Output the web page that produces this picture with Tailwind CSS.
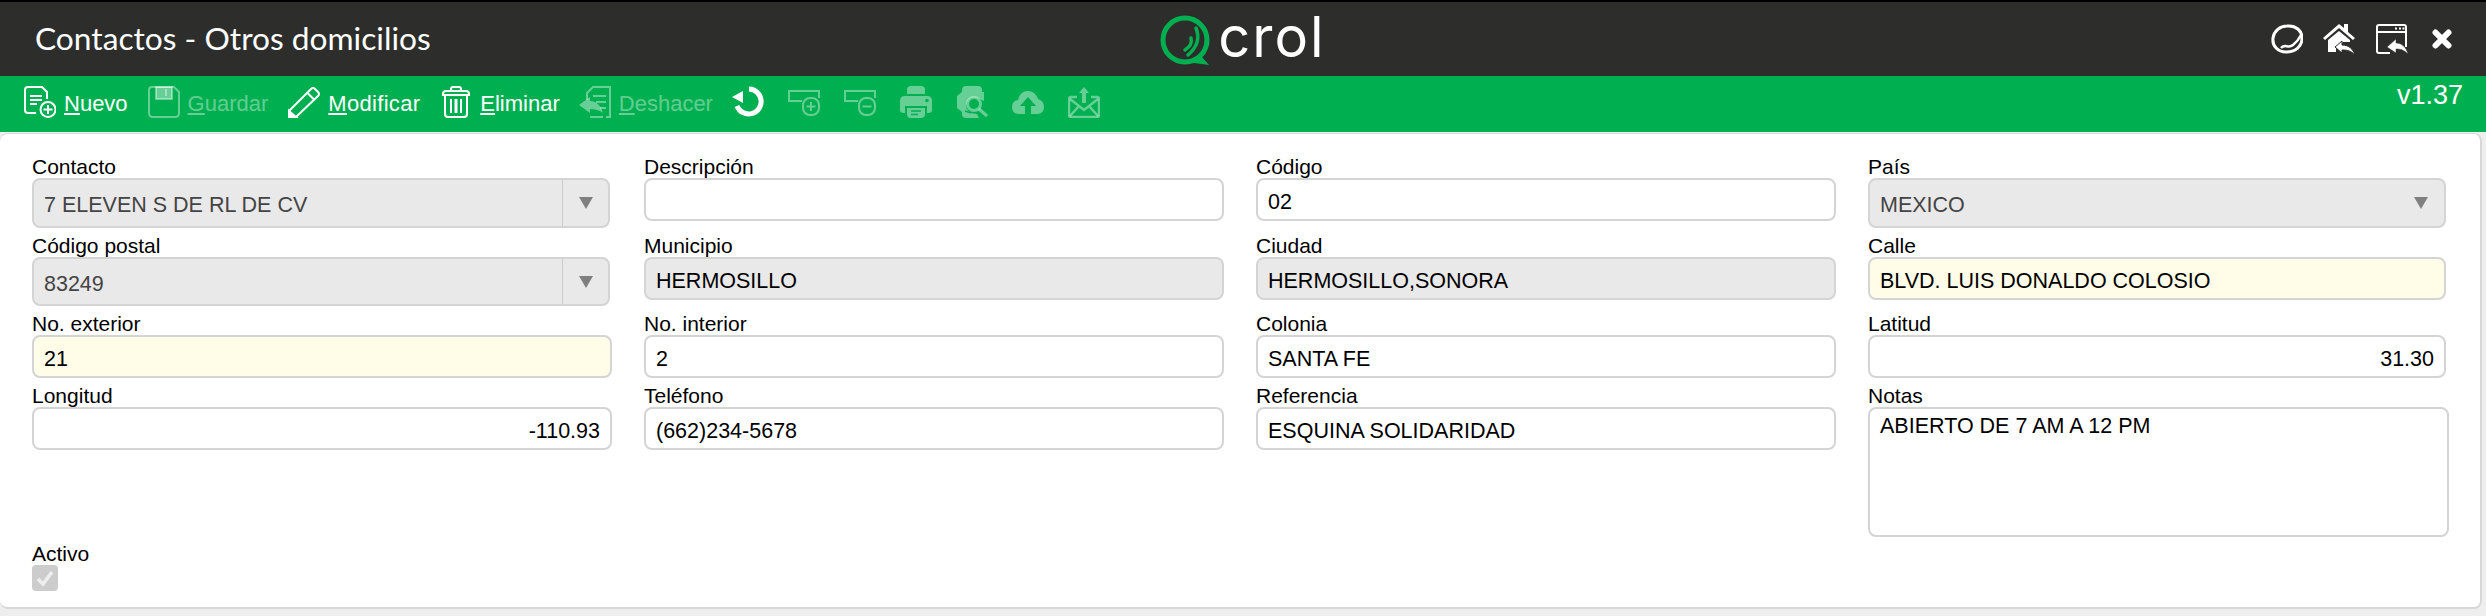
<!DOCTYPE html>
<html lang="es">
<head>
  <meta charset="UTF-8">
  <title>Contactos - Otros domicilios</title>
  <script src="https://cdn.jsdelivr.net/npm/@tailwindcss/browser@4"></script>
</head>
<body class="bg-[#eeeeee] h-[616px] w-[2486px] overflow-hidden font-['Liberation_Sans',Arial,sans-serif] text-black">

  <!-- title bar -->
  <header class="h-[76px] bg-[#2d2e2c] grid grid-cols-[1fr_auto_1fr] items-center border-t-2 border-black">
    <h1 class="pl-[35px] font-['Lato',sans-serif] text-[31.7px] text-white leading-none">Contactos - Otros domicilios</h1>
    <div class="flex items-center gap-[4px]">
      <svg class="w-[54px] h-[52px]" viewBox="0 0 54 52" fill="none" stroke="#00b050">
        <circle cx="25" cy="27" r="22" stroke-width="5"/>
        <path d="M27 49 L49 52 L41 43 Z" fill="#00b050" stroke="none"/>
        <path d="M36 15 Q42 30 28 42" stroke-width="3.500" stroke-linecap="round"/>
        <path d="M31 25 Q33 32 25 37" stroke-width="3.500" stroke-linecap="round"/>
      </svg>
      <span class="font-['Inter',sans-serif] font-normal text-[56px] leading-none text-white tracking-[2px] -mt-[4px]">crol</span>
    </div>
    <div class="flex items-center justify-end pr-[34px] gap-[20px] text-white">
      <svg class="w-[32px] h-[30px]" viewBox="0 0 32 30" fill="none" stroke="currentColor">
        <path d="M16 2 C25 1 31 7 31 14 C31 23 24 28 15 28 C7 28 1 22 2 14 C3 7 9 2 16 2 Z" stroke-width="3"/>
        <path d="M10 24 C14 19 17 25 22 21 C26 18 28 15 30 11" stroke-width="2.500"/>
      </svg>
      <svg class="w-[32px] h-[32px]" viewBox="0 0 32 32" fill="currentColor">
        <path d="M0 15 L16 1 L21 5 V1 H25 V9 L32 15 L30 17 L16 5 L2 17 Z"/>
        <path d="M5 17 L16 8 L27 17 V19 H20 L13 25 V29 H5 Z"/>
        <path d="M12 24 L19 18 V22 C26 22 30 26 32 32 C28 28 25 27 19 27 V30 Z" stroke="#2d2e2c" stroke-width="1"/>
      </svg>
      <svg class="w-[32px] h-[30px] ml-[1px]" viewBox="0 0 32 30" fill="none" stroke="currentColor">
        <path d="M14 29 H3 Q1 29 1 27 V3 Q1 1 3 1 H28 Q30 1 30 3 V23" stroke-width="2"/>
        <path d="M1 8 H30" stroke-width="2"/>
        <path d="M19 4.500 H21 M23 4.500 H25 M26.500 4.500 H28.500" stroke-width="2"/>
        <path d="M11 23 L20 15 V19 C26 19 30 23 32 30 C28 26 25 25 20 25 V29 Z" fill="currentColor" stroke="#2d2e2c" stroke-width="0.500"/>
      </svg>
      <svg class="w-[20px] h-[20px] ml-[4px]" viewBox="0 0 20 20" stroke="currentColor" stroke-width="6" stroke-linecap="round">
        <path d="M3.500 3.500 L16.500 16.500 M16.500 3.500 L3.500 16.500"/>
      </svg>
    </div>
  </header>

  <!-- toolbar -->
  <div class="h-[56px] bg-[#00b050] flex justify-between pl-[24px] pr-[23px]">
    <nav class="flex items-center h-[52px] text-[22px] leading-none">
      <button class="flex items-center gap-[8px] text-white mr-[20px]">
        <svg class="w-[32px] h-[32px]" viewBox="0 0 32 32" fill="none" stroke="currentColor" stroke-width="2">
          <path d="M12 27 H4 Q1 27 1 24 V4 Q1 1 4 1 H18 L23 6 V13"/>
          <path d="M6 10 H18 M6 14 H18 M6 18 H13"/>
          <circle cx="24" cy="23.500" r="7.500"/>
          <path d="M24 19 V28 M19.500 23.500 H28.500"/>
        </svg>
        <span class="pt-[4px]"><u>N</u>uevo</span>
      </button>
      <button class="flex items-center gap-[8px] text-white/40 mr-[20px]">
        <svg class="w-[32px] h-[32px]" viewBox="0 0 32 32" fill="none" stroke="currentColor" stroke-width="2">
          <path d="M4 1 H26 L31 6 V27 Q31 31 27 31 H5 Q1 31 1 27 V4 Q1 1 4 1 Z"/>
          <path d="M8 1 H24 V13 H8 Z M18 3 V10" fill="currentColor"/>
        </svg>
        <span class="pt-[4px]"><u>G</u>uardar</span>
      </button>
      <button class="flex items-center gap-[8px] text-white mr-[20px]">
        <svg class="w-[32px] h-[32px]" viewBox="0 0 32 32" fill="none" stroke="currentColor" stroke-width="2">
          <path d="M1 31 V25 L23 3 Q25 1 27 3 L30 6 Q32 8 30 10 L8 31 Z"/>
          <path d="M19 6.500 L26.500 14"/>
          <path d="M1 25 L8 31 H1 Z" fill="currentColor"/>
        </svg>
        <span class="pt-[4px] tracking-[0.3px]"><u>M</u>odificar</span>
      </button>
      <button class="flex items-center gap-[8px] text-white mr-[19px]">
        <svg class="w-[32px] h-[32px]" viewBox="0 0 32 32" fill="none" stroke="currentColor" stroke-width="2">
          <path d="M3 8 Q3 5 6 5 H26 Q29 5 29 8 V9 H3 Z"/>
          <path d="M11 5 V3 Q11 1 13 1 H19 Q21 1 21 3 V5"/>
          <path d="M5 9 V28 Q5 31 8 31 H24 Q27 31 27 28 V9"/>
          <path d="M11 13 V27 M21 13 V27"/>
          <path d="M16 13 V27" stroke-width="3"/>
        </svg>
        <span class="pt-[4px]"><u>E</u>liminar</span>
      </button>
      <button class="flex items-center gap-[8px] text-white/40 mr-[19px]">
        <svg class="w-[32px] h-[32px]" viewBox="0 0 32 32" fill="none" stroke="currentColor" stroke-width="2">
          <path d="M8 14 V7 L14 1 H31 V31 H27"/>
          <path d="M14 10 H27 M17 16 H27 M21 22 H27 M11 31 H24"/>
          <path d="M0 19 L11 11 V15 C18 15 22 20 24 27 C20 24 16 23 11 23 V27 Z" fill="currentColor" stroke="none"/>
        </svg>
        <span class="pt-[4px]"><u>D</u>eshacer</span>
      </button>
      <div class="flex items-center gap-[24px] text-white/40">
        <svg class="w-[32px] h-[32px] text-white" viewBox="0 0 32 32" fill="none" stroke="currentColor" stroke-width="5">
          <path d="M17 3 A12.500 12.500 0 1 1 5 20"/>
          <path d="M0 11 L11 5 V17 Z" fill="currentColor" stroke="none"/>
        </svg>
        <svg class="w-[32px] h-[32px]" viewBox="0 0 32 32" fill="none" stroke="currentColor" stroke-width="2">
          <path d="M14 15 H1 V5 H31 V12"/>
          <rect x="15" y="12" width="16" height="17" rx="7"/>
          <path d="M23 16 V25 M18.500 20.500 H27.500"/>
        </svg>
        <svg class="w-[32px] h-[32px]" viewBox="0 0 32 32" fill="none" stroke="currentColor" stroke-width="2">
          <path d="M14 15 H1 V5 H31 V12"/>
          <rect x="15" y="12" width="16" height="17" rx="7"/>
          <path d="M18.500 20.500 H27.500"/>
        </svg>
        <svg class="w-[32px] h-[32px]" viewBox="0 0 32 32" fill="currentColor">
          <path d="M7 4 Q7 0 11 0 H21 Q25 0 25 4 V8 H7 Z"/>
          <path d="M5 10 H27 Q32 10 32 15 V24 Q32 27 28 27 H27 V20 H5 V27 H4 Q0 27 0 24 V15 Q0 10 5 10 Z"/>
          <path d="M7 22 H25 V28 Q25 32 21 32 H11 Q7 32 7 28 Z"/>
          <path d="M11 25 H21 M11 28.500 H18" stroke="#00b050" stroke-width="1.500"/>
          <circle cx="27" cy="14.500" r="1.800" fill="#00b050"/>
        </svg>
        <svg class="w-[32px] h-[32px]" viewBox="0 0 32 32" fill="currentColor">
          <path d="M6 4 Q6 0 10 0 H22 Q26 0 26 4 V6 H28 V15 L24 13 Q15 9 11 16 Q8 23 15 27 L21 28 L23 32 H10 Q6 32 6 28 V26 L1 22 V10 L6 6 Z"/>
          <circle cx="18" cy="18" r="6.500" fill="none" stroke="currentColor" stroke-width="3"/>
          <path d="M23 23 L31 30" stroke="currentColor" stroke-width="3" fill="none"/>
          <path d="M9 25 L15 27" stroke="#00b050" stroke-width="1.500"/>
        </svg>
        <svg class="w-[32px] h-[32px]" viewBox="0 0 32 32" fill="currentColor">
          <path d="M7 28 Q0 28 0 21 Q0 15 6 14 Q8 5 16 5 Q23 5 26 13 Q32 15 32 21 Q32 28 25 28 H19 V20 H24 L16 11 L8 20 H13 V28 Z"/>
        </svg>
        <svg class="w-[32px] h-[32px]" viewBox="0 0 32 32" fill="none" stroke="currentColor" stroke-width="2.500">
          <path d="M9 11 H3 Q1 11 1 13 V29 Q1 31 3 31 H29 Q31 31 31 29 V13 Q31 11 29 11 H23"/>
          <path d="M2 13 L16 24 L30 13 M2 30 L11 20 M30 30 L21 20"/>
          <path d="M16 1 L21 7 H18 V17 H14 V7 H11 Z" fill="currentColor" stroke="none"/>
        </svg>
      </div>
    </nav>
    <span class="text-[27px] leading-none text-white pt-[6px]">v1.37</span>
  </div>

  <!-- form panel -->
  <main class="mt-[1px] mr-[4px] h-[476px] bg-white rounded-lg border-t border-b-2 border-r-2 border-[#d8d8d8] pl-[32px] pt-[21px] text-[21px]">
    <div class="grid grid-cols-[580px_580px_580px_578px] gap-x-[32px] gap-y-[6px] items-start">

      <div>
        <label class="block h-[23px] leading-[23px]">Contacto</label>
        <div class="flex items-center w-[578px] h-[50px] bg-[#e9e9e9] border-2 border-[#d4d4d4] rounded-lg text-[21.5px] text-[#444444]">
          <span class="flex-1 pl-[10px] pt-[5px]">7 ELEVEN S DE RL DE CV</span>
          <span class="w-[46px] h-full flex items-center justify-center border-l border-[#cccccc]"><span class="w-0 h-0 border-x-[7px] border-t-[12px] border-x-transparent border-t-[#808080]"></span></span>
        </div>
      </div>
      <div>
        <label class="block h-[23px] leading-[23px]">Descripción</label>
        <input type="text" value="" class="w-full h-[43px] bg-white border-2 border-[#d4d4d4] rounded-lg px-[10px] pt-[5px] text-[21.5px]">
      </div>
      <div>
        <label class="block h-[23px] leading-[23px]">Código</label>
        <input type="text" value="02" class="w-full h-[43px] bg-white border-2 border-[#d4d4d4] rounded-lg px-[10px] pt-[5px] text-[21.5px]">
      </div>
      <div>
        <label class="block h-[23px] leading-[23px]">País</label>
        <div class="flex items-center w-[578px] h-[50px] bg-[#e9e9e9] border-2 border-[#d4d4d4] rounded-lg text-[21.5px] text-[#444444]">
          <span class="flex-1 pl-[10px] pt-[5px]">MEXICO</span>
          <span class="w-[46px] h-full flex items-center justify-center"><span class="w-0 h-0 border-x-[7px] border-t-[12px] border-x-transparent border-t-[#808080]"></span></span>
        </div>
      </div>

      <div>
        <label class="block h-[23px] leading-[23px]">Código postal</label>
        <div class="flex items-center w-[578px] h-[49px] bg-[#e9e9e9] border-2 border-[#d4d4d4] rounded-lg text-[21.5px] text-[#444444]">
          <span class="flex-1 pl-[10px] pt-[5px]">83249</span>
          <span class="w-[46px] h-full flex items-center justify-center border-l border-[#cccccc]"><span class="w-0 h-0 border-x-[7px] border-t-[12px] border-x-transparent border-t-[#808080]"></span></span>
        </div>
      </div>
      <div>
        <label class="block h-[23px] leading-[23px]">Municipio</label>
        <input type="text" value="HERMOSILLO" disabled class="w-full h-[43px] bg-[#e9e9e9] border-2 border-[#d4d4d4] rounded-lg px-[10px] pt-[5px] text-[21.5px] text-black">
      </div>
      <div>
        <label class="block h-[23px] leading-[23px]">Ciudad</label>
        <input type="text" value="HERMOSILLO,SONORA" disabled class="w-full h-[43px] bg-[#e9e9e9] border-2 border-[#d4d4d4] rounded-lg px-[10px] pt-[5px] text-[21.5px] text-black">
      </div>
      <div>
        <label class="block h-[23px] leading-[23px]">Calle</label>
        <input type="text" value="BLVD. LUIS DONALDO COLOSIO" class="w-full h-[43px] bg-[#fffde7] border-2 border-[#d4d4d4] rounded-lg px-[10px] pt-[5px] text-[21.5px]">
      </div>

      <div>
        <label class="block h-[23px] leading-[23px]">No. exterior</label>
        <input type="text" value="21" class="w-full h-[43px] bg-[#fffde7] border-2 border-[#d4d4d4] rounded-lg px-[10px] pt-[5px] text-[21.5px]">
      </div>
      <div>
        <label class="block h-[23px] leading-[23px]">No. interior</label>
        <input type="text" value="2" class="w-full h-[43px] bg-white border-2 border-[#d4d4d4] rounded-lg px-[10px] pt-[5px] text-[21.5px]">
      </div>
      <div>
        <label class="block h-[23px] leading-[23px]">Colonia</label>
        <input type="text" value="SANTA FE" class="w-full h-[43px] bg-white border-2 border-[#d4d4d4] rounded-lg px-[10px] pt-[5px] text-[21.5px]">
      </div>
      <div>
        <label class="block h-[23px] leading-[23px]">Latitud</label>
        <input type="text" value="31.30" class="w-full h-[43px] bg-white border-2 border-[#d4d4d4] rounded-lg px-[10px] pt-[5px] text-[21.5px] text-right">
      </div>

      <div>
        <label class="block h-[23px] leading-[23px]">Longitud</label>
        <input type="text" value="-110.93" class="w-full h-[43px] bg-white border-2 border-[#d4d4d4] rounded-lg px-[10px] pt-[5px] text-[21.5px] text-right">
      </div>
      <div>
        <label class="block h-[23px] leading-[23px]">Teléfono</label>
        <input type="text" value="(662)234-5678" class="w-full h-[43px] bg-white border-2 border-[#d4d4d4] rounded-lg px-[10px] pt-[5px] text-[21.5px]">
      </div>
      <div>
        <label class="block h-[23px] leading-[23px]">Referencia</label>
        <input type="text" value="ESQUINA SOLIDARIDAD" class="w-full h-[43px] bg-white border-2 border-[#d4d4d4] rounded-lg px-[10px] pt-[5px] text-[21.5px]">
      </div>
      <div>
        <label class="block h-[23px] leading-[23px]">Notas</label>
        <textarea class="block w-[581px] h-[130px] bg-white border-2 border-[#d4d4d4] rounded-lg px-[10px] py-[4px] text-[21.5px] leading-[26px] resize-none">ABIERTO DE 7 AM A 12 PM</textarea>
      </div>

      <div class="col-span-4 -mt-[1px]">
        <label class="block h-[23px] leading-[23px]">Activo</label>
        <span class="flex items-center justify-center w-[26px] h-[26px] bg-[#cccccc] rounded-[4px]">
          <svg class="w-[18px] h-[18px]" viewBox="0 0 18 18" fill="none" stroke="#eeeeee" stroke-width="3.500"><path d="M2 10 L7 15 L16 3"/></svg>
        </span>
      </div>
    </div>
  </main>
</body>
</html>
